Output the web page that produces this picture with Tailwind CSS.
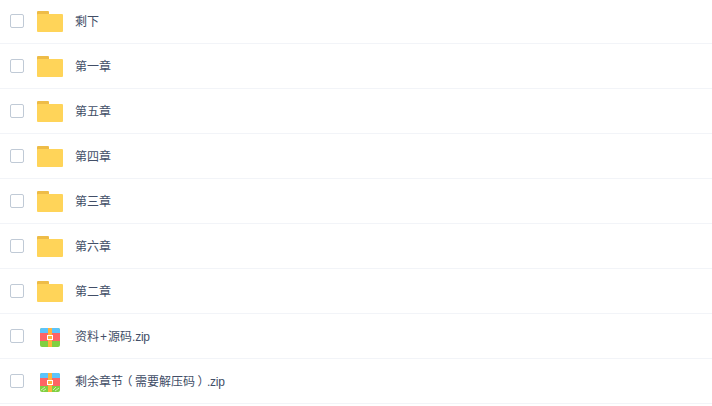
<!DOCTYPE html>
<html lang="en">
<head>
    <meta charset="UTF-8">
    <title>文件列表</title>
    <script src="https://cdn.jsdelivr.net/npm/@tailwindcss/browser@4"></script>
</head>
<body class="bg-white overflow-hidden font-['Liberation_Sans','Noto_Sans_CJK_SC',sans-serif] text-xs text-[#424e67]">
    <ul class="-mt-px">
        <li class="flex items-center h-[45px] border-b border-[#f2f4f8]">
            <span class="ml-2.5 w-3.5 h-3.5 rounded-[2px] border border-[#c0cad6]"></span>
            <svg class="ml-[13px] w-[26px] h-[21px]" viewBox="0 0 26 21"><path d="M1 0h10a1 1 0 0 1 1 1v3H0V1a1 1 0 0 1 1-1z" fill="#eebc47"/><path d="M1 3h24a1 1 0 0 1 1 1v16a1 1 0 0 1-1 1H1a1 1 0 0 1-1-1V4a1 1 0 0 1 1-1z" fill="#ffd459"/></svg>
            <span class="ml-3 pt-0.5">剩下</span>
        </li>
        <li class="flex items-center h-[45px] border-b border-[#f2f4f8]">
            <span class="ml-2.5 w-3.5 h-3.5 rounded-[2px] border border-[#c0cad6]"></span>
            <svg class="ml-[13px] w-[26px] h-[21px]" viewBox="0 0 26 21"><path d="M1 0h10a1 1 0 0 1 1 1v3H0V1a1 1 0 0 1 1-1z" fill="#eebc47"/><path d="M1 3h24a1 1 0 0 1 1 1v16a1 1 0 0 1-1 1H1a1 1 0 0 1-1-1V4a1 1 0 0 1 1-1z" fill="#ffd459"/></svg>
            <span class="ml-3 pt-0.5">第一章</span>
        </li>
        <li class="flex items-center h-[45px] border-b border-[#f2f4f8]">
            <span class="ml-2.5 w-3.5 h-3.5 rounded-[2px] border border-[#c0cad6]"></span>
            <svg class="ml-[13px] w-[26px] h-[21px]" viewBox="0 0 26 21"><path d="M1 0h10a1 1 0 0 1 1 1v3H0V1a1 1 0 0 1 1-1z" fill="#eebc47"/><path d="M1 3h24a1 1 0 0 1 1 1v16a1 1 0 0 1-1 1H1a1 1 0 0 1-1-1V4a1 1 0 0 1 1-1z" fill="#ffd459"/></svg>
            <span class="ml-3 pt-0.5">第五章</span>
        </li>
        <li class="flex items-center h-[45px] border-b border-[#f2f4f8]">
            <span class="ml-2.5 w-3.5 h-3.5 rounded-[2px] border border-[#c0cad6]"></span>
            <svg class="ml-[13px] w-[26px] h-[21px]" viewBox="0 0 26 21"><path d="M1 0h10a1 1 0 0 1 1 1v3H0V1a1 1 0 0 1 1-1z" fill="#eebc47"/><path d="M1 3h24a1 1 0 0 1 1 1v16a1 1 0 0 1-1 1H1a1 1 0 0 1-1-1V4a1 1 0 0 1 1-1z" fill="#ffd459"/></svg>
            <span class="ml-3 pt-0.5">第四章</span>
        </li>
        <li class="flex items-center h-[45px] border-b border-[#f2f4f8]">
            <span class="ml-2.5 w-3.5 h-3.5 rounded-[2px] border border-[#c0cad6]"></span>
            <svg class="ml-[13px] w-[26px] h-[21px]" viewBox="0 0 26 21"><path d="M1 0h10a1 1 0 0 1 1 1v3H0V1a1 1 0 0 1 1-1z" fill="#eebc47"/><path d="M1 3h24a1 1 0 0 1 1 1v16a1 1 0 0 1-1 1H1a1 1 0 0 1-1-1V4a1 1 0 0 1 1-1z" fill="#ffd459"/></svg>
            <span class="ml-3 pt-0.5">第三章</span>
        </li>
        <li class="flex items-center h-[45px] border-b border-[#f2f4f8]">
            <span class="ml-2.5 w-3.5 h-3.5 rounded-[2px] border border-[#c0cad6]"></span>
            <svg class="ml-[13px] w-[26px] h-[21px]" viewBox="0 0 26 21"><path d="M1 0h10a1 1 0 0 1 1 1v3H0V1a1 1 0 0 1 1-1z" fill="#eebc47"/><path d="M1 3h24a1 1 0 0 1 1 1v16a1 1 0 0 1-1 1H1a1 1 0 0 1-1-1V4a1 1 0 0 1 1-1z" fill="#ffd459"/></svg>
            <span class="ml-3 pt-0.5">第六章</span>
        </li>
        <li class="flex items-center h-[45px] border-b border-[#f2f4f8]">
            <span class="ml-2.5 w-3.5 h-3.5 rounded-[2px] border border-[#c0cad6]"></span>
            <svg class="ml-[13px] w-[26px] h-[21px]" viewBox="0 0 26 21"><path d="M1 0h10a1 1 0 0 1 1 1v3H0V1a1 1 0 0 1 1-1z" fill="#eebc47"/><path d="M1 3h24a1 1 0 0 1 1 1v16a1 1 0 0 1-1 1H1a1 1 0 0 1-1-1V4a1 1 0 0 1 1-1z" fill="#ffd459"/></svg>
            <span class="ml-3 pt-0.5">第二章</span>
        </li>
        <li class="flex items-center h-[45px] border-b border-[#f2f4f8]">
            <span class="ml-2.5 w-3.5 h-3.5 rounded-[2px] border border-[#c0cad6]"></span>
            <svg class="ml-4 mt-0.5 w-5 h-[19px]" viewBox="0 0 20 19"><rect width="20" height="19" rx="2" fill="#80d040"/><path d="M2 0h16a2 2 0 0 1 2 2v3H0V2a2 2 0 0 1 2-2z" fill="#5cc4fa"/><rect y="5" width="20" height="8" fill="#ff6464"/><rect x="8" width="4" height="19" fill="#ffb43c"/><rect x="7.5" y="7.5" width="5" height="4" fill="#ffb43c" stroke="#fff" stroke-width="1"/></svg>
            <span class="ml-[15px] pt-0.5">资料<span class="mx-px">+</span>源码<span class="tracking-[-0.25px]">.zip</span></span>
        </li>
        <li class="flex items-center h-[45px] border-b border-[#f2f4f8]">
            <span class="ml-2.5 w-3.5 h-3.5 rounded-[2px] border border-[#c0cad6]"></span>
            <svg class="ml-4 mt-0.5 w-5 h-[19px]" viewBox="0 0 20 19"><rect width="20" height="19" rx="2" fill="#80d040"/><path d="M2 0h16a2 2 0 0 1 2 2v3H0V2a2 2 0 0 1 2-2z" fill="#5cc4fa"/><rect y="5" width="20" height="8" fill="#ff6464"/><rect x="8" width="4" height="19" fill="#ffb43c"/><rect x="7.5" y="7.5" width="5" height="4" fill="#ffb43c" stroke="#fff" stroke-width="1"/><path d="M1 17l4-3M3 18l3-2M13 17l3-3M15 18l4-3" stroke="#fff" stroke-opacity=".6" stroke-width="1" fill="none"/></svg>
            <span class="ml-[15px] pt-0.5">剩余章节<span class="inline-block w-3 text-center [font-feature-settings:'palt']">（</span>需要解压码<span class="inline-block w-3 text-center [font-feature-settings:'palt']">）</span><span class="tracking-[-0.25px]">.zip</span></span>
        </li>
    </ul>
</body>
</html>
